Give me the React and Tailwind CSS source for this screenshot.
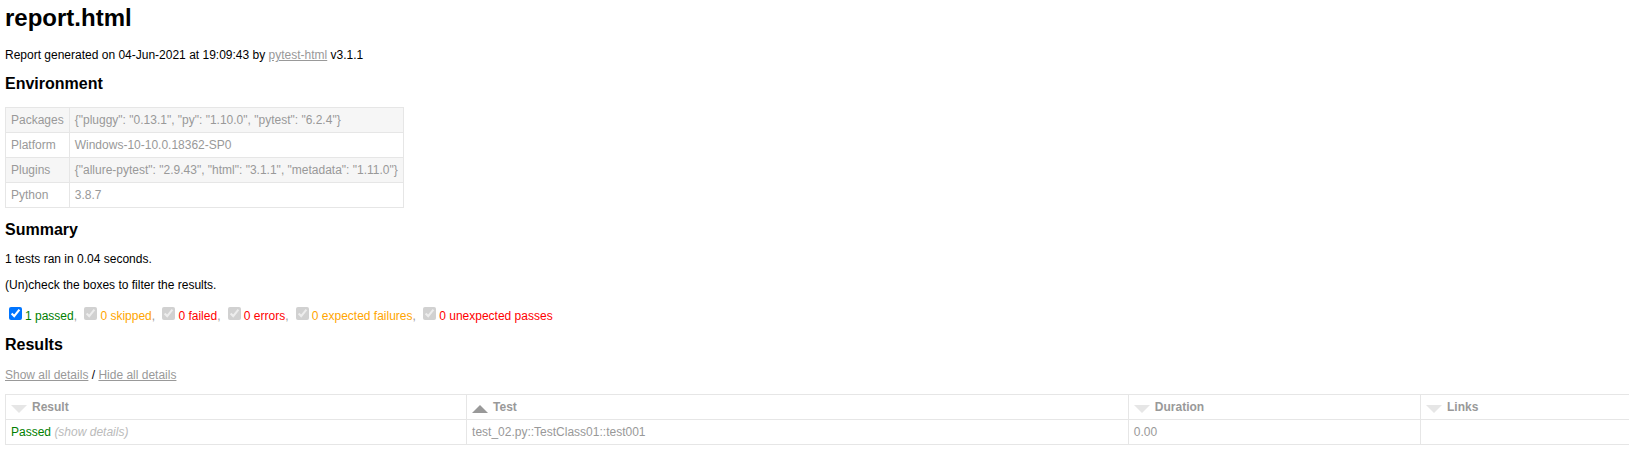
const environment = [
  ['Packages', '{"pluggy": "0.13.1", "py": "1.10.0", "pytest": "6.2.4"}'],
  ['Platform', 'Windows-10-10.0.18362-SP0'],
  ['Plugins', '{"allure-pytest": "2.9.43", "html": "3.1.1", "metadata": "1.11.0"}'],
  ['Python', '3.8.7'],
];

const filters = [
  { id: 'passed', text: '1 passed', color: 'text-[#008000]', enabled: true },
  { id: 'skipped', text: '0 skipped', color: 'text-[#ffa500]' },
  { id: 'failed', text: '0 failed', color: 'text-[#ff0000]' },
  { id: 'error', text: '0 errors', color: 'text-[#ff0000]' },
  { id: 'xfailed', text: '0 expected failures', color: 'text-[#ffa500]' },
  { id: 'xpassed', text: '0 unexpected passes', color: 'text-[#ff0000]' },
];

const columns = [
  { title: 'Result', width: 'w-[28.4%]' },
  { title: 'Test', width: 'w-[40.76%]', active: true },
  { title: 'Duration', width: 'w-[18%]' },
  { title: 'Links', width: '' },
];

function SortArrow({ active }) {
  return (
    <svg
      className={active ? 'mt-1 h-2 w-4 fill-[#999]' : 'mt-1 h-2 w-4 fill-[#e6e6e6]'}
      viewBox="0 0 16 8"
      aria-hidden="true"
    >
      <path d={active ? 'M0 8L8 0L16 8Z' : 'M0 0H16L8 8Z'} />
    </svg>
  );
}

function Heading({ children }) {
  return <h2 className="text-[16px] leading-[18px] font-bold text-black">{children}</h2>;
}

export default function App() {
  return (
    <main className="min-w-[800px] overflow-hidden bg-white pt-1 pl-[5px] font-['Liberation_Sans',Arial,sans-serif] text-[12px] leading-[14px] text-[#999]">
      <h1 className="text-[24px] leading-[28px] font-bold text-black">report.html</h1>
      <p className="mt-4 mb-[13px] text-black">
        Report generated on 04-Jun-2021 at 19:09:43 by{' '}
        <a href="#pytest-html" className="text-[#999] underline">pytest-html</a> v3.1.1
      </p>

      <Heading>Environment</Heading>
      <table className="mt-[14px] mb-[13px] border-collapse border border-[#e6e6e6]">
        <tbody>
          {environment.map(([name, value]) => (
            <tr key={name} className="odd:bg-[#f6f6f6]">
              <td className="border border-[#e6e6e6] p-[5px]">{name}</td>
              <td className="border border-[#e6e6e6] p-[5px]">{value}</td>
            </tr>
          ))}
        </tbody>
      </table>

      <Heading>Summary</Heading>
      <p className="mt-[13px] text-black">1 tests ran in 0.04 seconds.</p>
      <p className="mt-3 text-black">(Un)check the boxes to filter the results.</p>
      <div className="mt-3 mb-[13px]">
        {filters.map((filter, index) => (
          <span key={filter.id}>
            <input
              id={filter.id}
              type="checkbox"
              defaultChecked
              disabled={!filter.enabled}
              className="m-[3px] ml-1 h-[13px] w-[13px] align-baseline"
            />
            <label htmlFor={filter.id} className={filter.color}>{filter.text}</label>
            {index < filters.length - 1 && ', '}
          </span>
        ))}
      </div>

      <Heading>Results</Heading>
      <p className="mt-[14px] mb-3 text-black">
        <a href="#show" className="text-[#999] underline">Show all details</a> /{' '}
        <a href="#hide" className="text-[#999] underline">Hide all details</a>
      </p>
      <table className="mb-3 w-full table-fixed border-collapse border border-r-0 border-[#e6e6e6]">
        <thead>
          <tr>
            {columns.map((column) => (
              <th
                key={column.title}
                className={`${column.width} border border-[#e6e6e6] p-[5px] text-left font-bold last:border-r-0`}
              >
                <button type="button" className="flex cursor-pointer items-center gap-[5px] font-bold">
                  <SortArrow active={column.active} />
                  {column.title}
                </button>
              </th>
            ))}
          </tr>
        </thead>
        <tbody>
          <tr>
            <td className="border border-[#e6e6e6] p-[5px]">
              <span className="text-[#008000]">Passed</span>{' '}
              <a href="#details" className="text-[#bbb] italic">(show details)</a>
            </td>
            <td className="border border-[#e6e6e6] p-[5px]">test_02.py::TestClass01::test001</td>
            <td className="border border-[#e6e6e6] p-[5px]">0.00</td>
            <td className="border border-r-0 border-[#e6e6e6] p-[5px]"></td>
          </tr>
        </tbody>
      </table>
    </main>
  );
}
